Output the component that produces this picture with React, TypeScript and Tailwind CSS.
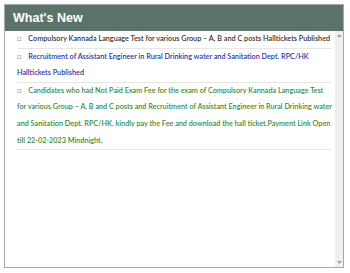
import React from "react";

type NewsItem = { text: string; color: string };

const items: NewsItem[] = [
  {
    text: "Compulsory Kannada Language Test for various Group – A, B and C posts Halltickets Published",
    color: "text-[#333333]",
  },
  {
    text: "Recruitment of Assistant Engineer in Rural Drinking water and Sanitation Dept. RPC/HK Halltickets Published",
    color: "text-[#2b34a6]",
  },
  {
    text: "Candidates who had Not Paid Exam Fee for the exam of Compulsory Kannada Language Test for various Group – A, B and C posts and Recruitment of Assistant Engineer in Rural Drinking water and Sanitation Dept. RPC/HK. kindly pay the Fee and download the hall ticket.Payment Link Open till 22-02-2023 Mindnight.",
    color: "text-[#3b8a35]",
  },
];

export default function App() {
  return (
    <div className="h-[273px] w-[350px] bg-white p-1 pr-[6px] pb-[5px]">
      <div className="flex h-full flex-col border border-[#a8a8a8]">
        <div className="flex h-[26px] items-center bg-[#5b7369] px-2 font-['Liberation_Sans',sans-serif] text-[12.5px] font-bold text-white">
          What's New
        </div>
        <div className="flex min-h-0 flex-1">
          <ul className="flex-1 pl-3 pr-[3px] font-['Lato',sans-serif] text-[7.25px] font-semibold leading-[16.6px]">
            {items.map((item, i) => (
              <li key={i} className={`border-b border-[#e6e6e6] ${item.color}`}>
                <span className="mr-[7px] inline-block text-[#9a9a9a]">□</span>
                {item.text}
              </li>
            ))}
          </ul>
          <div className="flex w-[8px] flex-col items-center justify-between bg-[#f0f0f0] py-[3px]">
            <svg width="5" height="3" viewBox="0 0 5 3">
              <path d="M0 3 L2.5 0 L5 3 Z" fill="#a3a3a3" />
            </svg>
            <svg width="5" height="3" viewBox="0 0 5 3">
              <path d="M0 0 L2.5 3 L5 0 Z" fill="#a3a3a3" />
            </svg>
          </div>
        </div>
      </div>
    </div>
  );
}
